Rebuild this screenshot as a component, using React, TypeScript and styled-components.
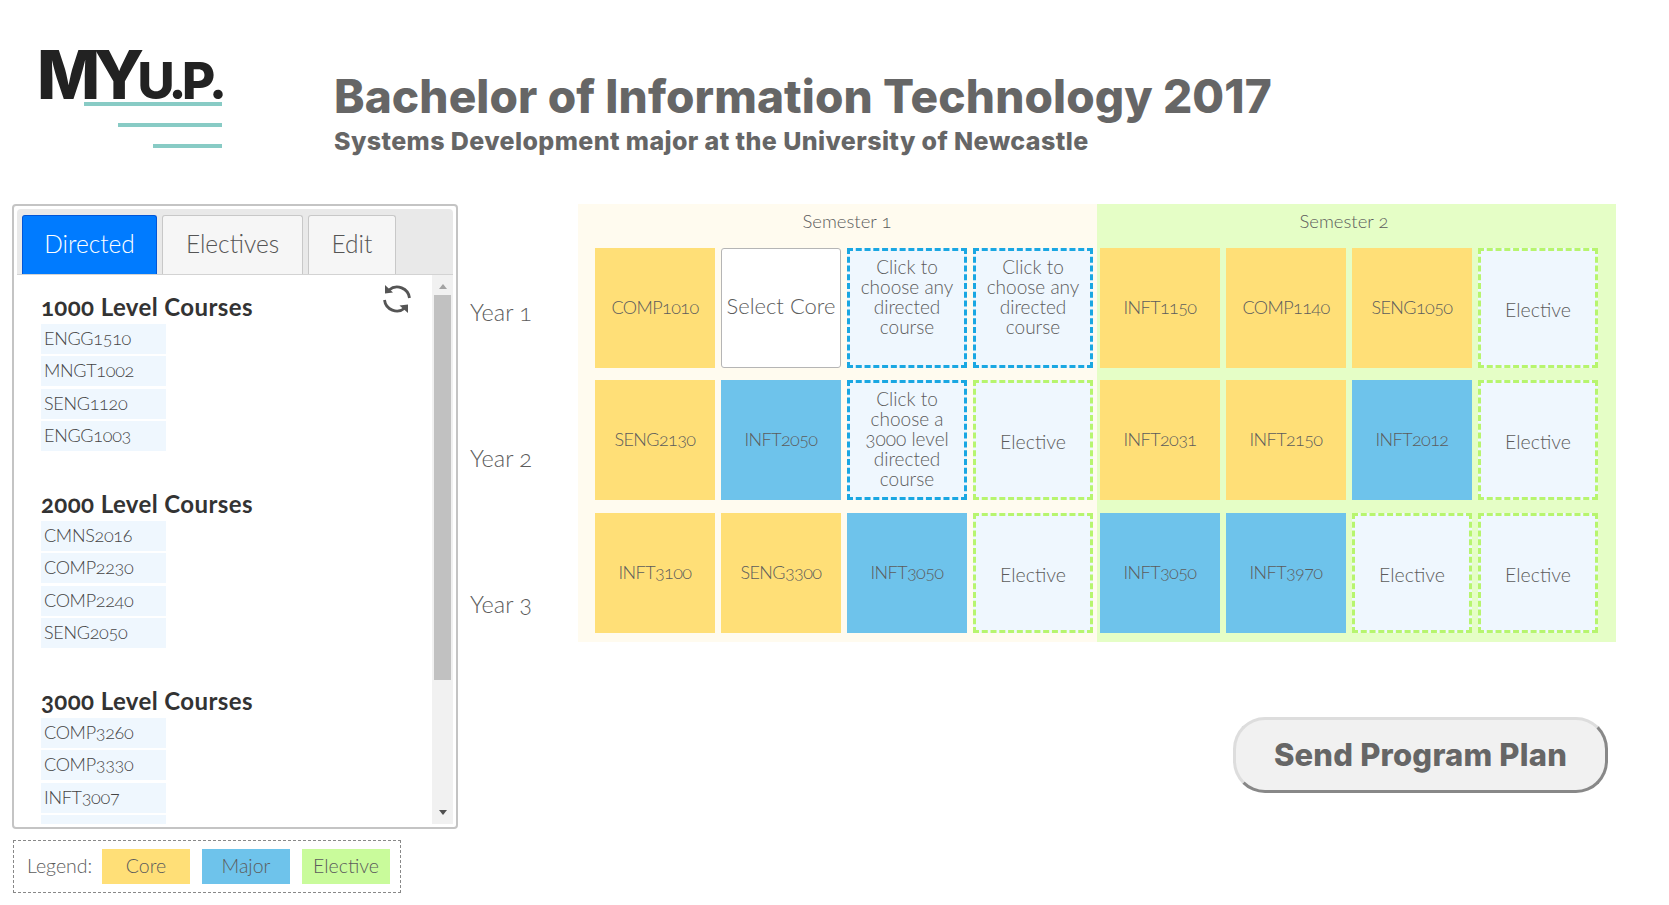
import styled, { createGlobalStyle } from "styled-components";

const GlobalStyle = createGlobalStyle`
  html, body {
    margin: 0;
    padding: 0;
    background: #fff;
    font-family: "Lato", "Open Sans", sans-serif;
    font-variant-numeric: oldstyle-nums;
    color: #5c5c5c;
  }
  * { box-sizing: border-box; }
`;

const Page = styled.div`
  width: 1669px;
  height: 905px;
  overflow: hidden;
`;

const Header = styled.header`
  height: 204px;
  display: flex;
`;

const Logo = styled.div`
  width: 334px;
  padding: 38px 0 0 38px;
`;

const LogoText = styled.div`
  height: 64px;
  margin-left: -1px;
  font-family: "Inter", "Lato", sans-serif;
  font-weight: 800;
  font-size: 67px;
  line-height: 74px;
  letter-spacing: -6.5px;
  color: #222;
  white-space: nowrap;
  span {
    font-size: 51px;
    letter-spacing: -4.5px;
  }
`;

const LogoLine = styled.div<{ $width: number }>`
  width: ${(p) => p.$width}px;
  height: 4px;
  margin: 0 0 17px ${(p) => 184 - p.$width}px;
  background: #88cbc5;
`;

const TitleBlock = styled.div`
  padding-top: 68px;
`;

const Title = styled.h1`
  margin: 0;
  font-family: "Inter", "Lato", sans-serif;
  font-size: 46px;
  line-height: 56px;
  font-weight: 800;
  letter-spacing: 0.1px;
  color: #666;
  font-variant-numeric: lining-nums;
`;

const SubTitle = styled.h2`
  margin: 0;
  font-family: "Inter", "Lato", sans-serif;
  font-size: 25px;
  line-height: 34px;
  font-weight: 800;
  letter-spacing: 0.4px;
  color: #666;
`;

const Main = styled.main`
  display: flex;
  padding-left: 12px;
`;

const LeftColumn = styled.div`
  width: 446px;
`;

const Panel = styled.div`
  height: 625px;
  border: 2px solid #c4c4c4;
  border-radius: 4px;
  padding: 3px;
  display: flex;
  flex-direction: column;
`;

const TabBar = styled.div`
  height: 66px;
  flex: none;
  display: flex;
  gap: 5px;
  padding: 6px 0 0 5px;
  background: #e9e9e9;
  border-bottom: 1px solid #d3d3d3;
  border-radius: 4px 4px 0 0;
`;

const Tab = styled.div<{ $active?: boolean; $width: number }>`
  width: ${(p) => p.$width}px;
  display: flex;
  align-items: center;
  justify-content: center;
  padding-bottom: 3px;
  font-size: 24.5px;
  font-weight: 300;
  border: 1px solid ${(p) => (p.$active ? "#0056d8" : "#c8c8c8")};
  border-bottom: none;
  border-radius: 3px 3px 0 0;
  background: ${(p) => (p.$active ? "#007bff" : "#f6f6f6")};
  color: ${(p) => (p.$active ? "#fff" : "#555")};
`;

const PanelBody = styled.div`
  flex: 1;
  min-height: 0;
  display: flex;
  position: relative;
`;

const CourseList = styled.div`
  flex: 1;
  overflow: hidden;
  padding: 17px 0 0 24px;
`;

const CourseGroup = styled.section`
  height: 197px;
`;

const GroupTitle = styled.h3`
  margin: 0 0 2px;
  font-size: 24px;
  line-height: 30px;
  font-weight: 700;
  letter-spacing: 0.4px;
  color: #333;
`;

const CourseItem = styled.div`
  width: 125px;
  height: 30px;
  margin-bottom: 2.4px;
  padding-left: 3px;
  background: #eff7fe;
  font-size: 18px;
  line-height: 29px;
  font-weight: 300;
  letter-spacing: -0.3px;
  color: #444;
`;

const ResetIcon = styled.svg`
  position: absolute;
  top: 9px;
  right: 41px;
  width: 30px;
  height: 30px;
`;

const ScrollTrack = styled.div`
  width: 21px;
  flex: none;
  background: #f1f1f1;
  display: flex;
  flex-direction: column;
  align-items: center;
`;

const ScrollUp = styled.div`
  margin: 9px 0 6px;
  border-left: 4px solid transparent;
  border-right: 4px solid transparent;
  border-bottom: 5px solid #a3a3a3;
`;

const ScrollThumb = styled.div`
  width: 17px;
  height: 385px;
  background: #c1c1c1;
`;

const ScrollDown = styled.div`
  margin-top: auto;
  margin-bottom: 9px;
  border-left: 4px solid transparent;
  border-right: 4px solid transparent;
  border-top: 5px solid #505050;
`;

const Legend = styled.div`
  width: 388px;
  height: 53px;
  margin: 11px 0 0 1px;
  border: 1px dashed #888;
  display: flex;
  align-items: center;
  padding: 0 0 0 13px;
  font-size: 19.5px;
  font-weight: 300;
`;

const LegendLabel = styled.span`
  flex: none;
  width: 75px;
  padding-bottom: 2px;
`;

const LegendChip = styled.div<{ $color: string }>`
  flex: none;
  width: 88px;
  height: 35px;
  margin-right: 12px;
  padding-bottom: 2px;
  background: ${(p) => p.$color};
  display: flex;
  align-items: center;
  justify-content: center;
`;

const YearColumn = styled.div`
  width: 120px;
  padding: 91px 0 0 12px;
`;

const YearLabel = styled.div`
  height: 146px;
  font-size: 23.5px;
  line-height: 34px;
  font-weight: 300;
`;

const RightColumn = styled.div`
  width: 1039px;
`;

const Planner = styled.div`
  display: flex;
  height: 438px;
`;

const Semester = styled.div<{ $bg: string; $pad: string }>`
  background: ${(p) => p.$bg};
  padding: ${(p) => p.$pad};
`;

const SemesterTitle = styled.div<{ $pad: string }>`
  height: 44px;
  text-align: center;
  font-size: 18.5px;
  line-height: 34px;
  font-weight: 300;
  padding: ${(p) => p.$pad};
`;

const CellGrid = styled.div`
  display: grid;
  grid-template-columns: repeat(4, 120px);
  grid-auto-rows: 120px;
  column-gap: 6px;
  row-gap: 12.4px;
`;

type CellKind = "core" | "major" | "select" | "directed" | "elective";

const codeText = "align-items: center; font-size: 18px; letter-spacing: -0.6px; padding-bottom: 2px;";

const cellStyles: Record<CellKind, string> = {
  core: `background: #ffdf77; ${codeText}`,
  major: `background: #6ec3eb; ${codeText}`,
  select:
    "background: #fff; border: 1px solid #b5b5b5; border-radius: 3px; align-items: center; font-size: 22px; padding-bottom: 5px;",
  directed:
    "background: #eff7fe; border: 3px dashed #1aa7e2; padding-top: 6px; line-height: 20px; font-size: 19px;",
  elective:
    "background: #eff7fe; border: 3px dashed #b7f56e; align-items: center; font-size: 19.5px; padding-top: 3px;",
};

const Cell = styled.div<{ $kind: CellKind }>`
  display: flex;
  justify-content: center;
  text-align: center;
  font-weight: 300;
  ${(p) => cellStyles[p.$kind]}
`;

const ButtonRow = styled.div`
  display: flex;
  justify-content: flex-end;
  padding: 75px 9px 0 0;
`;

const SendButton = styled.button`
  width: 375px;
  height: 76px;
  padding-bottom: 2px;
  border: 3px solid;
  border-color: #ddd #888 #888 #ddd;
  border-radius: 32px;
  background: #f1f1f1;
  color: #666;
  font-family: "Inter", "Lato", sans-serif;
  font-size: 31px;
  font-weight: 800;
  letter-spacing: 0.2px;
`;

const groups = [
  { title: "1000 Level Courses", items: ["ENGG1510", "MNGT1002", "SENG1120", "ENGG1003"] },
  { title: "2000 Level Courses", items: ["CMNS2016", "COMP2230", "COMP2240", "SENG2050"] },
  { title: "3000 Level Courses", items: ["COMP3260", "COMP3330", "INFT3007", ""] },
];

const anyDirected = "Click to choose any directed course";

const semesterOne: [CellKind, string][] = [
  ["core", "COMP1010"],
  ["select", "Select Core"],
  ["directed", anyDirected],
  ["directed", anyDirected],
  ["core", "SENG2130"],
  ["major", "INFT2050"],
  ["directed", "Click to choose a 3000 level directed course"],
  ["elective", "Elective"],
  ["core", "INFT3100"],
  ["core", "SENG3300"],
  ["major", "INFT3050"],
  ["elective", "Elective"],
];

const semesterTwo: [CellKind, string][] = [
  ["core", "INFT1150"],
  ["core", "COMP1140"],
  ["core", "SENG1050"],
  ["elective", "Elective"],
  ["core", "INFT2031"],
  ["core", "INFT2150"],
  ["major", "INFT2012"],
  ["elective", "Elective"],
  ["major", "INFT3050"],
  ["major", "INFT3970"],
  ["elective", "Elective"],
  ["elective", "Elective"],
];

function App() {
  return (
    <Page>
      <GlobalStyle />
      <Header>
        <Logo>
          <LogoText>
            MY<span>U.P.</span>
          </LogoText>
          <LogoLine $width={138} />
          <LogoLine $width={104} />
          <LogoLine $width={69} />
        </Logo>
        <TitleBlock>
          <Title>Bachelor of Information Technology 2017</Title>
          <SubTitle>Systems Development major at the University of Newcastle</SubTitle>
        </TitleBlock>
      </Header>
      <Main>
        <LeftColumn>
          <Panel>
            <TabBar>
              <Tab $active $width={135}>
                Directed
              </Tab>
              <Tab $width={141}>Electives</Tab>
              <Tab $width={88}>Edit</Tab>
            </TabBar>
            <PanelBody>
              <CourseList>
                {groups.map((group) => (
                  <CourseGroup key={group.title}>
                    <GroupTitle>{group.title}</GroupTitle>
                    {group.items.map((item, i) => (
                      <CourseItem key={i}>{item}</CourseItem>
                    ))}
                  </CourseGroup>
                ))}
              </CourseList>
              <ResetIcon viewBox="0 0 30 30">
                <g fill="none" stroke="#555" strokeWidth="2.8">
                  <path d="M7 6 A12.5 12.5 0 0 1 27.5 14" />
                  <path d="M23 24 A12.5 12.5 0 0 1 2.5 16" />
                </g>
                <path d="M3 1 L3 9.5 L11 8.5 Z" fill="#555" />
                <path d="M26 29 L26 20.5 L17.5 21.5 Z" fill="#555" />
              </ResetIcon>
              <ScrollTrack>
                <ScrollUp />
                <ScrollThumb />
                <ScrollDown />
              </ScrollTrack>
            </PanelBody>
          </Panel>
          <Legend>
            <LegendLabel>Legend:</LegendLabel>
            <LegendChip $color="#ffdf77">Core</LegendChip>
            <LegendChip $color="#6ec3eb">Major</LegendChip>
            <LegendChip $color="#c9fb9b">Elective</LegendChip>
          </Legend>
        </LeftColumn>
        <YearColumn>
          <YearLabel>Year 1</YearLabel>
          <YearLabel>Year 2</YearLabel>
          <YearLabel>Year 3</YearLabel>
        </YearColumn>
        <RightColumn>
          <Planner>
            <Semester $bg="#fffbef" $pad="0 4px 0 17px">
              <SemesterTitle $pad="0 0 0 6px">Semester 1</SemesterTitle>
              <CellGrid>
                {semesterOne.map(([kind, text], i) => (
                  <Cell key={i} $kind={kind}>
                    {text}
                  </Cell>
                ))}
              </CellGrid>
            </Semester>
            <Semester $bg="#e5fec6" $pad="0 18px 0 3px">
              <SemesterTitle $pad="0 10px 0 0">Semester 2</SemesterTitle>
              <CellGrid>
                {semesterTwo.map(([kind, text], i) => (
                  <Cell key={i} $kind={kind}>
                    {text}
                  </Cell>
                ))}
              </CellGrid>
            </Semester>
          </Planner>
          <ButtonRow>
            <SendButton>Send Program Plan</SendButton>
          </ButtonRow>
        </RightColumn>
      </Main>
    </Page>
  );
}

export default App;
